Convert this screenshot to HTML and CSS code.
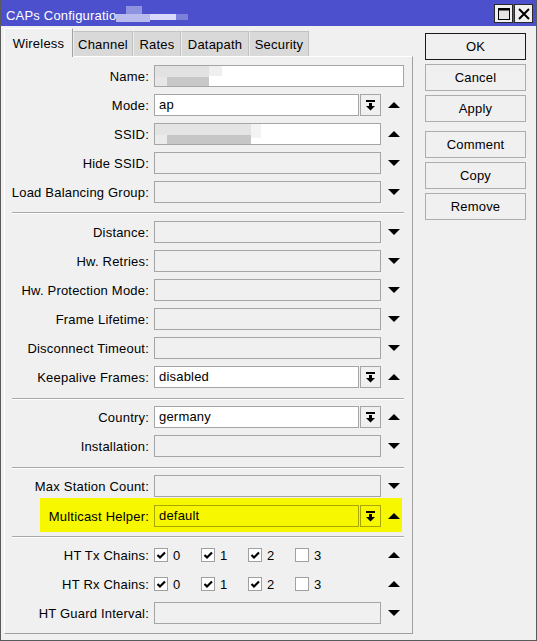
FILE: index.html
```html
<!DOCTYPE html>
<html>
<head>
<meta charset="utf-8">
<title>CAPs Configuration</title>
<link rel="stylesheet" href="styles.css">
</head>
<body>
<div class="window">
  <div class="titlebar">
    <span class="title">CAPs Configuratio<span class="redact-title"></span></span>
    <div class="tb-buttons">
      <span class="tb-btn"><svg width="12" height="12" viewBox="0 0 12 12"><rect x="0.5" y="0.5" width="11" height="11" fill="#e4e4e4" stroke="#000"/><rect x="1" y="1" width="10" height="1.5" fill="#000"/></svg></span>
      <span class="tb-btn"><svg width="12" height="12" viewBox="0 0 12 12"><path d="M1 1 L11 11 M11 1 L1 11" stroke="#000" stroke-width="2"/></svg></span>
    </div>
  </div>
  <div class="content">
    <div class="main">
      <div class="tabs">
        <div class="tab active t-wireless">Wireless</div>
        <div class="tab t-channel">Channel</div>
        <div class="tab t-rates">Rates</div>
        <div class="tab t-datapath">Datapath</div>
        <div class="tab t-security">Security</div>
      </div>
      <div class="panel">
        <div class="row"><span class="lbl">Name:</span><span class="inp val w-full nopad"><span class="redact r-name"></span></span></div>
        <div class="row"><span class="lbl">Mode:</span><span class="inp val w-short">ap</span><span class="dd"><svg width="9" height="11" viewBox="0 0 9 11"><rect x="0" y="0" width="9" height="2"/><rect x="3" y="3" width="3" height="3"/><polygon points="0,6 9,6 4.5,10.5"/></svg></span><span class="arrow"><svg width="12" height="6" viewBox="0 0 12 6"><polygon points="0,6 12,6 6,0"/></svg></span></div>
        <div class="row"><span class="lbl">SSID:</span><span class="inp val w-mid nopad"><span class="redact r-ssid"></span></span><span class="arrow"><svg width="12" height="6" viewBox="0 0 12 6"><polygon points="0,6 12,6 6,0"/></svg></span></div>
        <div class="row"><span class="lbl">Hide SSID:</span><span class="inp w-mid"></span><span class="arrow"><svg width="12" height="6" viewBox="0 0 12 6"><polygon points="0,0 12,0 6,6"/></svg></span></div>
        <div class="row"><span class="lbl">Load Balancing Group:</span><span class="inp w-mid"></span><span class="arrow"><svg width="12" height="6" viewBox="0 0 12 6"><polygon points="0,0 12,0 6,6"/></svg></span></div>
        <div class="sep s1"></div>
        <div class="row"><span class="lbl">Distance:</span><span class="inp w-mid"></span><span class="arrow"><svg width="12" height="6" viewBox="0 0 12 6"><polygon points="0,0 12,0 6,6"/></svg></span></div>
        <div class="row"><span class="lbl">Hw. Retries:</span><span class="inp w-mid"></span><span class="arrow"><svg width="12" height="6" viewBox="0 0 12 6"><polygon points="0,0 12,0 6,6"/></svg></span></div>
        <div class="row"><span class="lbl">Hw. Protection Mode:</span><span class="inp w-mid"></span><span class="arrow"><svg width="12" height="6" viewBox="0 0 12 6"><polygon points="0,0 12,0 6,6"/></svg></span></div>
        <div class="row"><span class="lbl">Frame Lifetime:</span><span class="inp w-mid"></span><span class="arrow"><svg width="12" height="6" viewBox="0 0 12 6"><polygon points="0,0 12,0 6,6"/></svg></span></div>
        <div class="row"><span class="lbl">Disconnect Timeout:</span><span class="inp w-mid"></span><span class="arrow"><svg width="12" height="6" viewBox="0 0 12 6"><polygon points="0,0 12,0 6,6"/></svg></span></div>
        <div class="row"><span class="lbl">Keepalive Frames:</span><span class="inp val w-short">disabled</span><span class="dd"><svg width="9" height="11" viewBox="0 0 9 11"><rect x="0" y="0" width="9" height="2"/><rect x="3" y="3" width="3" height="3"/><polygon points="0,6 9,6 4.5,10.5"/></svg></span><span class="arrow"><svg width="12" height="6" viewBox="0 0 12 6"><polygon points="0,6 12,6 6,0"/></svg></span></div>
        <div class="sep s2"></div>
        <div class="row"><span class="lbl">Country:</span><span class="inp val w-short">germany</span><span class="dd"><svg width="9" height="11" viewBox="0 0 9 11"><rect x="0" y="0" width="9" height="2"/><rect x="3" y="3" width="3" height="3"/><polygon points="0,6 9,6 4.5,10.5"/></svg></span><span class="arrow"><svg width="12" height="6" viewBox="0 0 12 6"><polygon points="0,6 12,6 6,0"/></svg></span></div>
        <div class="row"><span class="lbl">Installation:</span><span class="inp w-mid"></span><span class="arrow"><svg width="12" height="6" viewBox="0 0 12 6"><polygon points="0,0 12,0 6,6"/></svg></span></div>
        <div class="sep s2"></div>
        <div class="row tight"><span class="lbl">Max Station Count:</span><span class="inp w-mid"></span><span class="arrow"><svg width="12" height="6" viewBox="0 0 12 6"><polygon points="0,0 12,0 6,6"/></svg></span></div>
        <div class="row hl"><span class="lbl">Multicast Helper:</span><span class="inp val w-short">default</span><span class="dd"><svg width="9" height="11" viewBox="0 0 9 11"><rect x="0" y="0" width="9" height="2"/><rect x="3" y="3" width="3" height="3"/><polygon points="0,6 9,6 4.5,10.5"/></svg></span><span class="arrow"><svg width="12" height="6" viewBox="0 0 12 6"><polygon points="0,6 12,6 6,0"/></svg></span></div>
        <div class="sep s3"></div>
        <div class="row"><span class="lbl">HT Tx Chains:</span>
          <span class="cbs">
            <span class="cb-item"><span class="cb on"><svg width="12" height="12" viewBox="0 0 12 12"><path d="M2.5 6 L5 8.5 L10 3.5" fill="none" stroke="#000" stroke-width="2.2"/></svg></span>0</span>
            <span class="cb-item"><span class="cb on"><svg width="12" height="12" viewBox="0 0 12 12"><path d="M2.5 6 L5 8.5 L10 3.5" fill="none" stroke="#000" stroke-width="2.2"/></svg></span>1</span>
            <span class="cb-item"><span class="cb on"><svg width="12" height="12" viewBox="0 0 12 12"><path d="M2.5 6 L5 8.5 L10 3.5" fill="none" stroke="#000" stroke-width="2.2"/></svg></span>2</span>
            <span class="cb-item"><span class="cb"></span>3</span>
          </span>
          <span class="arrow"><svg width="12" height="6" viewBox="0 0 12 6"><polygon points="0,6 12,6 6,0"/></svg></span></div>
        <div class="row"><span class="lbl">HT Rx Chains:</span>
          <span class="cbs">
            <span class="cb-item"><span class="cb on"><svg width="12" height="12" viewBox="0 0 12 12"><path d="M2.5 6 L5 8.5 L10 3.5" fill="none" stroke="#000" stroke-width="2.2"/></svg></span>0</span>
            <span class="cb-item"><span class="cb on"><svg width="12" height="12" viewBox="0 0 12 12"><path d="M2.5 6 L5 8.5 L10 3.5" fill="none" stroke="#000" stroke-width="2.2"/></svg></span>1</span>
            <span class="cb-item"><span class="cb on"><svg width="12" height="12" viewBox="0 0 12 12"><path d="M2.5 6 L5 8.5 L10 3.5" fill="none" stroke="#000" stroke-width="2.2"/></svg></span>2</span>
            <span class="cb-item"><span class="cb"></span>3</span>
          </span>
          <span class="arrow"><svg width="12" height="6" viewBox="0 0 12 6"><polygon points="0,6 12,6 6,0"/></svg></span></div>
        <div class="row"><span class="lbl">HT Guard Interval:</span><span class="inp w-mid"></span><span class="arrow"><svg width="12" height="6" viewBox="0 0 12 6"><polygon points="0,0 12,0 6,6"/></svg></span></div>
      </div>
    </div>
    <div class="side">
      <div class="btn default">OK</div>
      <div class="btn">Cancel</div>
      <div class="btn">Apply</div>
      <div class="btn gap">Comment</div>
      <div class="btn">Copy</div>
      <div class="btn">Remove</div>
    </div>
  </div>
</div>
</body>
</html>
```
FILE: styles.css
```css
* { box-sizing: border-box; }
html, body { margin: 0; padding: 0; }
body {
  font-family: "Liberation Sans", Arial, sans-serif;
  font-size: 13px;
  letter-spacing: 0.2px;
  color: #000;
  background: #f0f0f0;
}
.window {
  width: 537px;
  height: 641px;
  border: 1px solid #5a5a5a;
  border-top: none;
  background: #f0f0f0;
  display: flex;
  flex-direction: column;
}
.titlebar {
  height: 26px;
  background: #4d50cc;
  color: #fff;
  display: flex;
  align-items: center;
  justify-content: space-between;
  padding: 0 3px 0 5px;
}
.title {
  display: flex;
  align-items: center;
  margin-top: 4px;
  white-space: nowrap;
}
.redact-title {
  display: inline-block;
  width: 72px;
  height: 16px;
  margin-top: -2px;
  background:
    linear-gradient(#8f92de, #8f92de) 10px 0 / 16px 8px no-repeat,
    linear-gradient(#b9bbef, #b9bbef) 0 8px / 34px 8px no-repeat,
    linear-gradient(#d9dafb, #d9dafb) 34px 8px / 26px 6px no-repeat,
    linear-gradient(#7d80d8, #7d80d8) 60px 8px / 12px 6px no-repeat;
}
.tb-buttons {
  display: flex;
  gap: 1px;
  margin-top: 1px;
}
.tb-btn {
  width: 19px;
  height: 19px;
  background: #f0f0f0;
  border: 1px solid #2a2a2a;
  display: flex;
  align-items: center;
  justify-content: center;
}
.content {
  display: flex;
  padding-left: 3px;
}
.main {
  width: 409px;
  display: flex;
  flex-direction: column;
}
.tabs {
  display: flex;
  align-items: flex-end;
  height: 28px;
  margin-top: 2px;
  position: relative;
  z-index: 1;
}
.tab {
  height: 25px;
  display: flex;
  align-items: center;
  justify-content: center;
  background: #d9d9d9;
  border: 1px solid #c2c2c2;
  border-left-color: #ececec;
  border-bottom: none;
}
.tab.active {
  height: 29px;
  margin-bottom: -1px;
  background: #f0f0f0;
  border-color: #ffffff #a0a0a0 #f0f0f0 #ffffff;
}
.t-wireless { width: 69px; }
.t-channel { width: 60px; }
.t-rates { width: 48px; }
.t-datapath { width: 68px; }
.t-security { width: 60px; }
.panel {
  width: 409px;
  display: flex;
  flex-direction: column;
  border: 1px solid;
  border-color: #ffffff #a0a0a0 #a0a0a0 #ffffff;
  padding: 8px 0 2px 0;
}
.row {
  display: flex;
  align-items: center;
  height: 22px;
  margin-bottom: 7px;
}
.row.tight { margin-bottom: 1px; }
.lbl {
  width: 144px;
  margin-right: 5px;
  text-align: right;
  white-space: nowrap;
}
.inp {
  height: 22px;
  border: 1px solid #a5a5a5;
  background: #f0f0f0;
  padding-left: 4px;
  line-height: 20px;
  overflow: hidden;
  white-space: nowrap;
}
.inp.val { background: #fff; }
.inp.nopad { padding-left: 0; }
.w-full { width: 250px; }
.w-mid { width: 227px; }
.w-short { width: 205px; }
.dd {
  width: 21px;
  height: 22px;
  margin-left: 1px;
  border: 1px solid #a5a5a5;
  background: #f0f0f0;
  display: flex;
  align-items: center;
  justify-content: center;
}
.arrow {
  margin-left: 7px;
  width: 12px;
  height: 6px;
  display: flex;
}
.arrow svg, .dd svg { display: block; fill: #000; }
.redact { display: block; height: 20px; }
.r-name {
  width: 67px;
  background:
    linear-gradient(#c8c8c8, #c8c8c8) 12px 11px / 42px 9px no-repeat,
    linear-gradient(#e2e2e2, #e2e2e2) 0 0 / 54px 11px no-repeat,
    linear-gradient(#e7e7e7, #e7e7e7) 0 11px / 12px 9px no-repeat,
    linear-gradient(#efefef, #efefef) 54px 0 / 13px 10px no-repeat;
}
.r-ssid {
  width: 106px;
  background:
    linear-gradient(#c6c6c6, #c6c6c6) 12px 11px / 84px 9px no-repeat,
    linear-gradient(#e4e4e4, #e4e4e4) 0 0 / 96px 11px no-repeat,
    linear-gradient(#ebebeb, #ebebeb) 0 11px / 12px 9px no-repeat,
    linear-gradient(#f3f3f3, #f3f3f3) 96px 0 / 10px 14px no-repeat;
}
.row.hl {
  margin-left: 35px;
  width: 362px;
  height: 34px;
  margin-bottom: 0;
  background: #f7f700;
  padding-top: 2px;
}
.row.hl .lbl { width: 109px; }
.row.hl .inp, .row.hl .dd {
  background: #f7f700;
  border-color: #a8a800;
}
.sep {
  width: 392px;
  height: 2px;
  flex: none;
  margin-left: 7px;
  border-top: 1px solid #a8a8a8;
  border-bottom: 1px solid #ffffff;
}
.sep.s1 { margin-top: 2px; margin-bottom: 7px; }
.sep.s2 { margin-top: 3px; margin-bottom: 6px; }
.sep.s3 { margin-top: 4px; margin-bottom: 6px; }
.cbs {
  width: 227px;
  display: flex;
}
.cb-item {
  width: 47px;
  display: flex;
  align-items: center;
}
.cb {
  width: 14px;
  height: 14px;
  background: #fff;
  border: 1px solid #a0a0a0;
  margin-right: 5px;
  display: flex;
  align-items: center;
  justify-content: center;
}
.cb svg { display: block; }
.side {
  margin-left: 12px;
  margin-top: 7px;
  display: flex;
  flex-direction: column;
}
.btn {
  width: 101px;
  height: 27px;
  margin-bottom: 4px;
  border: 1px solid #adadad;
  background: #f0f0f0;
  display: flex;
  align-items: center;
  justify-content: center;
}
.btn.default { border-color: #1a1a1a; }
.btn.gap { margin-top: 5px; }
```
